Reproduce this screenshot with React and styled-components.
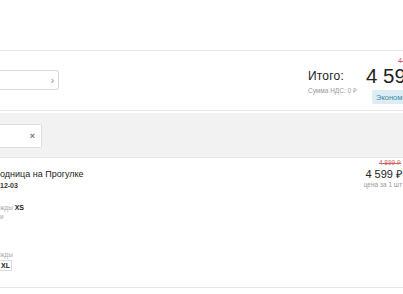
import React from 'react';
import styled, { createGlobalStyle } from 'styled-components';

const GlobalStyle = createGlobalStyle`
  html, body {
    margin: 0;
    padding: 0;
    background: #fff;
    overflow: hidden;
  }
  body {
    font-family: "Liberation Sans", Arial, sans-serif;
    color: #222;
  }
`;

const Page = styled.div`
  width: 403px;
  height: 294px;
  overflow: hidden;
`;

const TopSpace = styled.div`
  height: 50px;
  border-bottom: 1px solid #e6e6e6;
`;

const SummaryRow = styled.div`
  height: 59px;
  display: flex;
  align-items: center;
  justify-content: space-between;
  border-bottom: 1px solid #e6e6e6;
`;

const PromoField = styled.div`
  width: 59px;
  height: 20px;
  box-sizing: border-box;
  border: 1px solid #d9d9d9;
  border-left: none;
  border-radius: 0 3px 3px 0;
  display: flex;
  align-items: center;
  justify-content: flex-end;
  padding-right: 4px;
  margin-top: -1px;
  color: #888;
  font-size: 10px;
`;

const TotalBlock = styled.div`
  display: flex;
  align-items: center;
  gap: 9px;
  margin-right: -60px;
`;

const TotalLabel = styled.div`
  display: flex;
  flex-direction: column;
  gap: 3px;
  margin-top: 2px;

  .title {
    font-size: 12px;
    color: #222;
    letter-spacing: 0.2px;
  }
  .vat {
    font-size: 6.5px;
    color: #999;
  }
`;

const TotalPrice = styled.div`
  display: flex;
  flex-direction: column;
  align-items: flex-end;
  width: 97px;

  .old {
    font-size: 7px;
    color: #c66;
    text-decoration: line-through;
    line-height: 8px;
    align-self: flex-start;
    margin-left: 32px;
  }
  .value {
    font-size: 20.5px;
    line-height: 22px;
    color: #222;
    align-self: flex-start;
  }
`;

const SaveBadge = styled.div`
  margin-top: 3px;
  align-self: flex-start;
  margin-left: 6px;
  background: #dcedf3;
  color: #3d8aa8;
  font-size: 7.5px;
  padding: 2px 4px;
  border-radius: 2px;
  white-space: nowrap;
`;

const FilterBand = styled.div`
  margin-top: 2px;
  height: 44px;
  background: #f2f2f2;
  border-bottom: 1px solid #e3e3e3;
  display: flex;
  align-items: center;
`;

const FilterInput = styled.div`
  width: 42px;
  height: 24px;
  box-sizing: border-box;
  background: #fff;
  border: 1px solid #dedede;
  border-left: none;
  border-radius: 0 2px 2px 0;
  display: flex;
  align-items: center;
  justify-content: flex-end;
  padding-right: 6px;
  margin-top: 2px;
  font-size: 9px;
  font-weight: bold;
  color: #777;
`;

const ItemRow = styled.div`
  display: flex;
  justify-content: space-between;
  align-items: flex-start;
  padding-top: 4px;
  height: 130px;
  box-sizing: border-box;
  border-bottom: 1px solid #e6e6e6;
`;

const ItemInfo = styled.div`
  display: flex;
  flex-direction: column;
  padding-top: 7px;

  .name {
    font-size: 9px;
    color: #222;
    line-height: 11px;
  }
  .sku {
    font-size: 7px;
    font-weight: bold;
    color: #333;
    margin-top: 2px;
  }
`;

const Param = styled.div`
  font-size: 6.5px;
  color: #aaa;
  margin-top: ${p => p.gap || 0}px;
  line-height: 9px;

  b {
    color: #222;
    font-size: 7px;
  }
`;

const SizeChip = styled.div`
  margin-top: 1px;
  width: 12px;
  height: 11px;
  box-sizing: border-box;
  border: 1px solid #ddd;
  border-left: none;
  font-size: 7px;
  font-weight: bold;
  color: #222;
  display: flex;
  align-items: center;
  justify-content: flex-end;
  padding-right: 1px;
`;

const ItemPrice = styled.div`
  display: flex;
  flex-direction: column;
  align-items: flex-end;
  margin-right: 1px;
  margin-top: -3px;

  .old {
    font-size: 6.5px;
    line-height: 8px;
    color: #c66;
    text-decoration: line-through;
    margin-right: 1px;
  }
  .value {
    font-size: 11px;
    line-height: 12px;
    color: #222;
    margin-top: 1px;
  }
  .unit {
    font-size: 6.5px;
    line-height: 8px;
    color: #999;
    margin-top: 1px;
  }
`;

export default function App() {
  return (
    <Page>
      <GlobalStyle />
      <TopSpace />
      <SummaryRow>
        <PromoField>›</PromoField>
        <TotalBlock>
          <TotalLabel>
            <div className="title">Итого:</div>
            <div className="vat">Сумма НДС: 0 ₽</div>
          </TotalLabel>
          <TotalPrice>
            <div className="old">4 899 ₽</div>
            <div className="value">4 599 ₽</div>
            <SaveBadge>Экономия 300 ₽</SaveBadge>
          </TotalPrice>
        </TotalBlock>
      </SummaryRow>
      <FilterBand>
        <FilterInput>×</FilterInput>
      </FilterBand>
      <ItemRow>
        <ItemInfo>
          <div className="name">одница на Прогулке</div>
          <div className="sku">12-03</div>
          <Param gap={14}>жды <b>XS</b></Param>
          <Param>и</Param>
          <Param gap={29}>жды</Param>
          <SizeChip>XL</SizeChip>
        </ItemInfo>
        <ItemPrice>
          <div className="old">4 899 ₽</div>
          <div className="value">4 599 ₽</div>
          <div className="unit">цена за 1 шт</div>
        </ItemPrice>
      </ItemRow>
    </Page>
  );
}
